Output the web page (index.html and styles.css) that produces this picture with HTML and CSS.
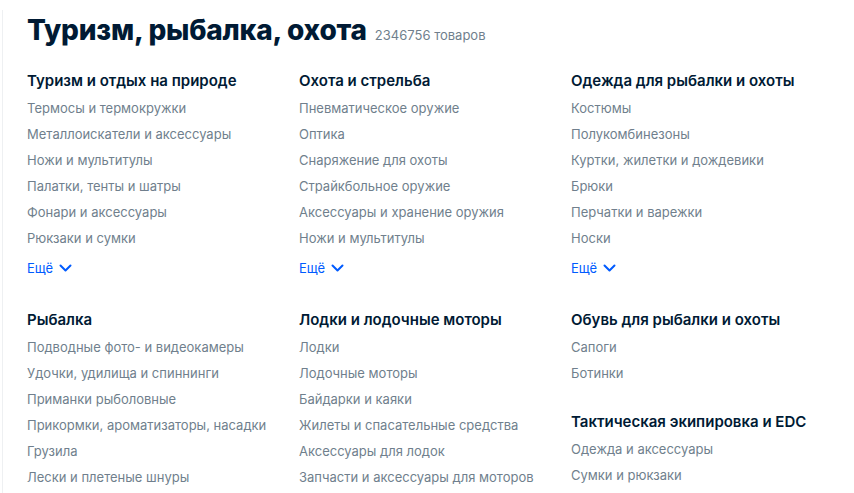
FILE: index.html
```html
<!DOCTYPE html>
<html lang="ru">
<head>
<meta charset="utf-8">
<link rel="stylesheet" href="styles.css">
</head>
<body>
<div class="page">
  <div class="title-row">
    <h1 class="title">Туризм, рыбалка, охота</h1>
    <span class="count">2346756 товаров</span>
  </div>
  <div class="grid">
    <div class="col">
      <div class="section">
        <div class="heading">Туризм и отдых на природе</div>
        <div class="item">Термосы и термокружки</div>
        <div class="item">Металлоискатели и аксессуары</div>
        <div class="item">Ножи и мультитулы</div>
        <div class="item">Палатки, тенты и шатры</div>
        <div class="item">Фонари и аксессуары</div>
        <div class="item">Рюкзаки и сумки</div>
        <div class="more">Ещё <svg class="chev" viewBox="0 0 13 8" width="13" height="8"><path d="M1.5 1.5 L6.5 6.5 L11.5 1.5" fill="none" stroke="currentColor" stroke-width="2" stroke-linecap="round" stroke-linejoin="round"/></svg></div>
      </div>
    </div>
    <div class="col">
      <div class="section">
        <div class="heading">Охота и стрельба</div>
        <div class="item">Пневматическое оружие</div>
        <div class="item">Оптика</div>
        <div class="item">Снаряжение для охоты</div>
        <div class="item">Страйкбольное оружие</div>
        <div class="item">Аксессуары и хранение оружия</div>
        <div class="item">Ножи и мультитулы</div>
        <div class="more">Ещё <svg class="chev" viewBox="0 0 13 8" width="13" height="8"><path d="M1.5 1.5 L6.5 6.5 L11.5 1.5" fill="none" stroke="currentColor" stroke-width="2" stroke-linecap="round" stroke-linejoin="round"/></svg></div>
      </div>
    </div>
    <div class="col">
      <div class="section">
        <div class="heading">Одежда для рыбалки и охоты</div>
        <div class="item">Костюмы</div>
        <div class="item">Полукомбинезоны</div>
        <div class="item">Куртки, жилетки и дождевики</div>
        <div class="item">Брюки</div>
        <div class="item">Перчатки и варежки</div>
        <div class="item">Носки</div>
        <div class="more">Ещё <svg class="chev" viewBox="0 0 13 8" width="13" height="8"><path d="M1.5 1.5 L6.5 6.5 L11.5 1.5" fill="none" stroke="currentColor" stroke-width="2" stroke-linecap="round" stroke-linejoin="round"/></svg></div>
      </div>
    </div>
    <div class="col">
      <div class="section">
        <div class="heading">Рыбалка</div>
        <div class="item">Подводные фото- и видеокамеры</div>
        <div class="item">Удочки, удилища и спиннинги</div>
        <div class="item">Приманки рыболовные</div>
        <div class="item">Прикормки, ароматизаторы, насадки</div>
        <div class="item">Грузила</div>
        <div class="item">Лески и плетеные шнуры</div>
      </div>
    </div>
    <div class="col">
      <div class="section">
        <div class="heading">Лодки и лодочные моторы</div>
        <div class="item">Лодки</div>
        <div class="item">Лодочные моторы</div>
        <div class="item">Байдарки и каяки</div>
        <div class="item">Жилеты и спасательные средства</div>
        <div class="item">Аксессуары для лодок</div>
        <div class="item">Запчасти и аксессуары для моторов</div>
      </div>
    </div>
    <div class="col">
      <div class="section">
        <div class="heading">Обувь для рыбалки и охоты</div>
        <div class="item">Сапоги</div>
        <div class="item">Ботинки</div>
      </div>
      <div class="section">
        <div class="heading">Тактическая экипировка и EDC</div>
        <div class="item">Одежда и аксессуары</div>
        <div class="item">Сумки и рюкзаки</div>
      </div>
    </div>
  </div>
</div>
</body>
</html>
```

FILE: styles.css
```css
html, body {
  margin: 0;
  padding: 0;
  background: #ffffff;
}
body {
  font-family: "Inter", "Noto Sans", sans-serif;
  overflow: hidden;
  height: 493px;
}
.page {
  margin-left: 2px;
  margin-top: 10px;
  border-left: 1px solid #eef0f2;
  padding-left: 24px;
  height: 483px;
}
.title-row {
  display: flex;
  align-items: baseline;
  gap: 8px;
  padding-top: 2px;
  height: 36px;
}
.title {
  margin: 0;
  font-size: 28px;
  line-height: 36px;
  font-weight: 800;
  color: #001a34;
  letter-spacing: -0.2px;
}
.count {
  font-size: 13px;
  color: #707f8d;
}
.grid {
  display: grid;
  grid-template-columns: 272px 272px 272px;
  row-gap: 27px;
  margin-top: 21px;
}
.col {
  display: flex;
  flex-direction: column;
  gap: 24px;
}
.heading {
  font-size: 15px;
  line-height: 24px;
  font-weight: 600;
  color: #001a34;
  margin-bottom: 2px;
}
.item {
  font-size: 13px;
  line-height: 26px;
  color: #707f8d;
}
.more {
  margin-top: 4px;
  font-size: 13px;
  line-height: 26px;
  color: #005bff;
  display: flex;
  align-items: center;
  gap: 6px;
}
.chev {
  display: block;
}
```
